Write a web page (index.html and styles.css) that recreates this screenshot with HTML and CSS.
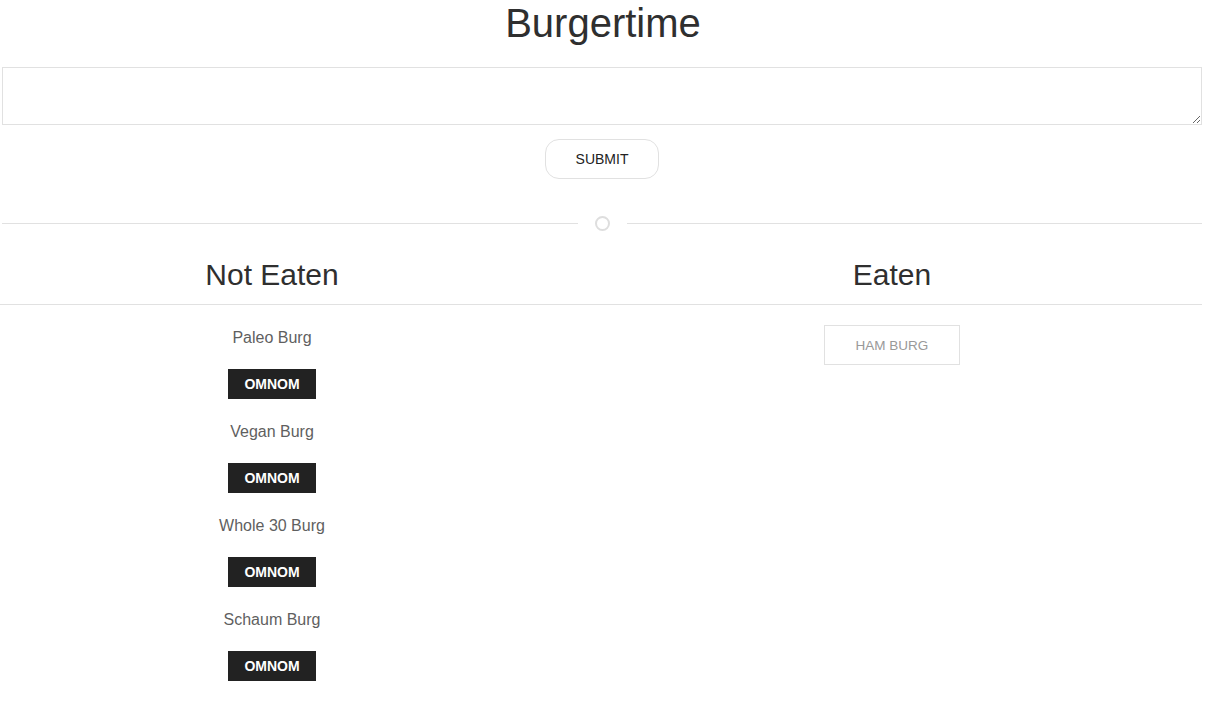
FILE: index.html
```html
<!DOCTYPE html>
<html>
<head>
<meta charset="utf-8">
<title>Burgertime</title>
<link rel="stylesheet" href="styles.css">
</head>
<body>
  <h1 class="title">Burgertime</h1>
  <form class="form">
    <textarea class="input"></textarea>
    <div class="submit-row"><button type="button" class="submit">SUBMIT</button></div>
  </form>
  <div class="divider"><span class="line"></span><span class="dot"></span><span class="line"></span></div>
  <div class="heads">
    <h2 class="head">Not Eaten</h2>
    <span></span>
    <h2 class="head">Eaten</h2>
  </div>
  <div class="cols">
    <ul class="list">
      <li class="item"><p class="name">Paleo Burg</p><button type="button" class="omnom">OMNOM</button></li>
      <li class="item"><p class="name">Vegan Burg</p><button type="button" class="omnom">OMNOM</button></li>
      <li class="item"><p class="name">Whole 30 Burg</p><button type="button" class="omnom">OMNOM</button></li>
      <li class="item"><p class="name">Schaum Burg</p><button type="button" class="omnom">OMNOM</button></li>
    </ul>
    <span></span>
    <ul class="eaten">
      <li class="eaten-item">HAM BURG</li>
    </ul>
  </div>
</body>
</html>
```
FILE: styles.css
```css
* { box-sizing: border-box; }
body {
  margin: 0;
  font-family: "Liberation Sans", Arial, sans-serif;
  color: #333;
  background: #fff;
}
.title {
  margin: 0;
  font-size: 40px;
  line-height: 46px;
  font-weight: 400;
  text-align: center;
  color: #2f2f2f;
}
.form {
  margin: 0;
  padding: 21px 4px 0 2px;
}
.input {
  display: block;
  width: 100%;
  height: 58px;
  margin: 0;
  border: 1px solid #e1e1e1;
  border-radius: 0;
  background: #fff;
  font-family: inherit;
}
.submit-row {
  margin-top: 14px;
  text-align: center;
}
.submit {
  width: 114px;
  height: 40px;
  border: 1px solid #e1e1e1;
  border-radius: 14px;
  background: #fff;
  font-family: inherit;
  font-size: 14px;
  color: #222;
  padding: 0;
  margin: 0;
}
.divider {
  display: flex;
  align-items: center;
  margin-top: 37px;
  padding: 0 4px 0 2px;
}
.line {
  flex: 1;
  height: 1px;
  background: #e1e1e1;
}
.dot {
  width: 15px;
  height: 15px;
  border: 2px solid #dedede;
  border-radius: 50%;
  margin: 0 17px;
}
.heads, .cols {
  display: grid;
  grid-template-columns: 544px 76px 544px;
  width: 1202px;
}
.heads {
  padding: 27px 0 12px;
  border-bottom: 1px solid #e1e1e1;
}
.head {
  margin: 0;
  font-size: 30px;
  line-height: 34px;
  font-weight: 400;
  text-align: center;
  color: #2f2f2f;
}
.list, .eaten {
  list-style: none;
  margin: 0;
  padding: 0;
  text-align: center;
}
.list { padding-top: 23px; }
.item { margin-bottom: 23px; }
.name {
  margin: 0 0 21px;
  font-size: 16px;
  line-height: 20px;
  color: #5f5f5f;
}
.omnom {
  width: 88px;
  height: 30px;
  border: 0;
  border-radius: 0;
  background: #222;
  color: #fff;
  font-family: inherit;
  font-weight: 700;
  font-size: 14px;
  padding: 0;
  margin: 0;
}
.eaten {
  padding-top: 20px;
  display: flex;
  flex-direction: column;
  align-items: center;
}
.eaten-item {
  width: 136px;
  height: 40px;
  border: 1px solid #e1e1e1;
  display: flex;
  align-items: center;
  justify-content: center;
  font-size: 13.5px;
  color: #999;
}
```
